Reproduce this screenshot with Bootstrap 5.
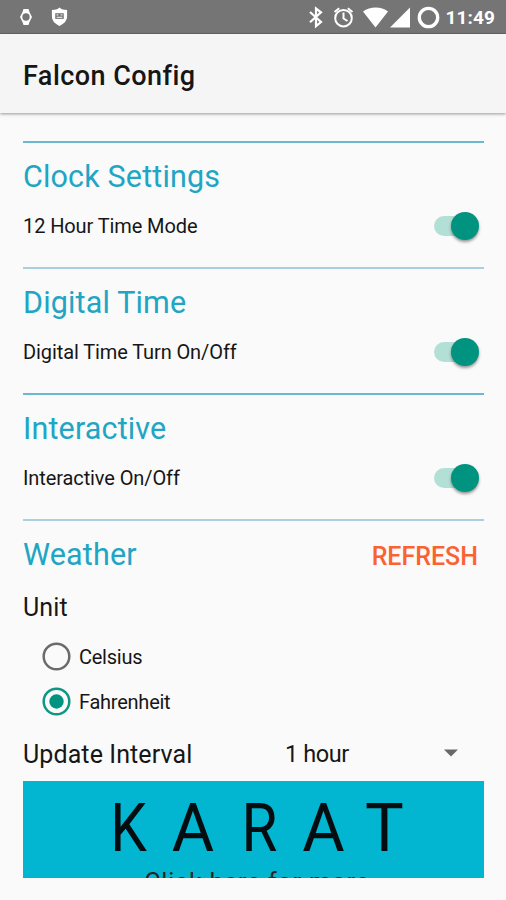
<!DOCTYPE html>
<html lang="en">
<head>
<meta charset="utf-8">
<meta name="viewport" content="width=device-width, initial-scale=1">
<title>Falcon Config</title>
<link href="https://cdn.jsdelivr.net/npm/bootstrap@5.3.0/dist/css/bootstrap.min.css" rel="stylesheet">
<style>
body{font-family:Roboto,sans-serif;background:#fafafa;color:#161616;height:900px;overflow:hidden;line-height:1}
.status-bar{height:34px;background:#757575;border-bottom:1px solid #686868;color:#fff;padding:0 11px 0 18px}
.clock{font-size:19px;font-weight:700;letter-spacing:.1px;line-height:34px;padding-top:3px}
.app-bar{height:79px;background:#f5f5f5;padding:0 23px;box-shadow:0 1px 3px rgba(0,0,0,.4)}
.app-title{font-size:27px;font-weight:500;line-height:36px;margin-top:24px;letter-spacing:.45px}
main{margin:28px 22px 0 23px}
.setting{height:126px;border-top:2px solid #6cb8ce}
.setting.soft{border-top-color:#a9d0df}
.setting h2{font-size:30.500px;font-weight:400;line-height:36px;color:#21a5c4;margin:16px 0 0;letter-spacing:.15px}
.setting-row{height:32px;margin-top:15px;font-size:20px;letter-spacing:-.1px}
.switch-track{width:43px;height:20px;border-radius:10px;background:#b3e0d6;margin-right:7px}
.switch-thumb{width:28px;height:28px;border-radius:50%;background:#009380;box-shadow:0 2px 3px rgba(0,0,0,.4);margin-right:-2px}
.refresh{font-size:25px;font-weight:500;color:#fb6232;line-height:30px;margin:21px 6px 0 0}
.field-name{font-size:25px;line-height:30px;letter-spacing:.1px}
.radios{margin:11px 0 0 19px}
.choice{height:45px;font-size:20px;gap:8px;letter-spacing:-.25px}
.interval{margin-top:13px;height:36px}
.interval-label{width:262px}
.interval-value{font-size:23.500px;letter-spacing:-.4px;padding-bottom:3px}
.promo{height:97px;margin-top:8px;background:#02b5d0;color:#050d10;overflow:hidden}
.brand{font-size:67px;line-height:70px;padding:12px 0 0 73px}
.brand span{text-align:center;transform:scaleX(.87)}
.brand .wide{transform:scaleX(.97)}
.cell-k{width:65px}.cell-a{width:64px}.cell-r{width:69px}.cell-a2{width:59px}.cell-t{width:63px}
.more{font-size:25px;line-height:30px;color:#252525;text-align:center;margin-top:5px;padding-left:7px;letter-spacing:.8px}
</style>
</head>
<body>
<header>
<div class="status-bar d-flex align-items-center justify-content-between">
  <div class="d-flex align-items-center">
    <svg width="16" height="18" viewBox="0 0 16 18"><path fill="#fff" d="M5.500 1h5l1 3L14 9l-2.500 5-1 3h-5l-1-3L2 9l2.500-5z"/><circle cx="8" cy="9" r="3.700" fill="#757575"/></svg>
    <svg class="ms-3" width="19" height="20" viewBox="0 0 20 20"><path fill="#fff" d="M10 0c2 2 4.500 2.500 8 2.500V9c0 5-3 8-8 10.500C5 17 2 14 2 9V2.500C5.500 2.500 8 2 10 0z"/><path fill="#757575" d="M5.500 6h9v6h-9z"/><path stroke="#fff" d="M6.800 7.800h2M11.200 7.800h2M7 10.300h6"/></svg>
  </div>
  <div class="d-flex align-items-center">
    <svg width="139" height="34" viewBox="307 0 139 34">
      <path fill="none" stroke="#fff" stroke-width="2.200" d="M310 12l11 10-5 4.200V8.500l5 3.800-11 10"/>
      <g fill="none" stroke="#fff" stroke-width="2"><circle cx="343.500" cy="18.200" r="8.300"/><path d="M334.500 12l4.700-3.800M352.500 12l-4.700-3.800M343.500 12.500v6l4 2.500"/></g>
      <path fill="#fff" d="M363 11.500c7-5.500 18.500-5.500 25 0L375.500 27.500zM410 7.500v20h-20z"/>
      <circle cx="428.500" cy="17.500" r="9.200" fill="none" stroke="#fff" stroke-width="3.300"/>
    </svg>
    <span class="clock">11:49</span>
  </div>
</div>
<div class="app-bar d-flex align-items-start"><h1 class="app-title mb-0">Falcon Config</h1></div>
</header>
<main>
  <section class="setting"><h2>Clock Settings</h2>
    <div class="setting-row d-flex align-items-center justify-content-between"><span>12 Hour Time Mode</span><div class="switch-track d-flex align-items-center justify-content-end"><div class="switch-thumb"></div></div></div></section>
  <section class="setting soft"><h2>Digital Time</h2>
    <div class="setting-row d-flex align-items-center justify-content-between"><span>Digital Time Turn On/Off</span><div class="switch-track d-flex align-items-center justify-content-end"><div class="switch-thumb"></div></div></div></section>
  <section class="setting"><h2>Interactive</h2>
    <div class="setting-row d-flex align-items-center justify-content-between"><span>Interactive On/Off</span><div class="switch-track d-flex align-items-center justify-content-end"><div class="switch-thumb"></div></div></div></section>
  <section class="setting soft h-auto">
    <div class="d-flex justify-content-between"><h2>Weather</h2><div class="refresh">REFRESH</div></div>
    <div class="field-name mt-3 pt-1">Unit</div>
    <div class="radios">
      <div class="choice d-flex align-items-center"><svg width="29" height="29"><circle cx="14.500" cy="14.500" r="12.800" fill="none" stroke="#6b6b6b" stroke-width="2.500"/></svg><span>Celsius</span></div>
      <div class="choice d-flex align-items-center"><svg width="29" height="29"><circle cx="14.500" cy="14.500" r="12.800" fill="none" stroke="#109784" stroke-width="2.500"/><circle cx="14.500" cy="14.500" r="7.200" fill="#009380"/></svg><span>Fahrenheit</span></div>
    </div>
    <div class="interval field-name d-flex align-items-center"><span class="interval-label">Update Interval</span><span class="interval-value">1 hour</span><svg class="ms-auto me-4 mb-1" width="18" height="8"><path d="M2 .5h14L9 7.500z" fill="#686868"/></svg></div>
    <div class="promo"><div class="brand d-flex"><span class="cell-k">K</span><span class="cell-a wide">A</span><span class="cell-r">R</span><span class="cell-a2 wide">A</span><span class="cell-t wide">T</span></div><div class="more">Click here for more</div></div>
  </section>
</main>
<script src="https://cdn.jsdelivr.net/npm/bootstrap@5.3.0/dist/js/bootstrap.bundle.min.js"></script>
</body>
</html>
